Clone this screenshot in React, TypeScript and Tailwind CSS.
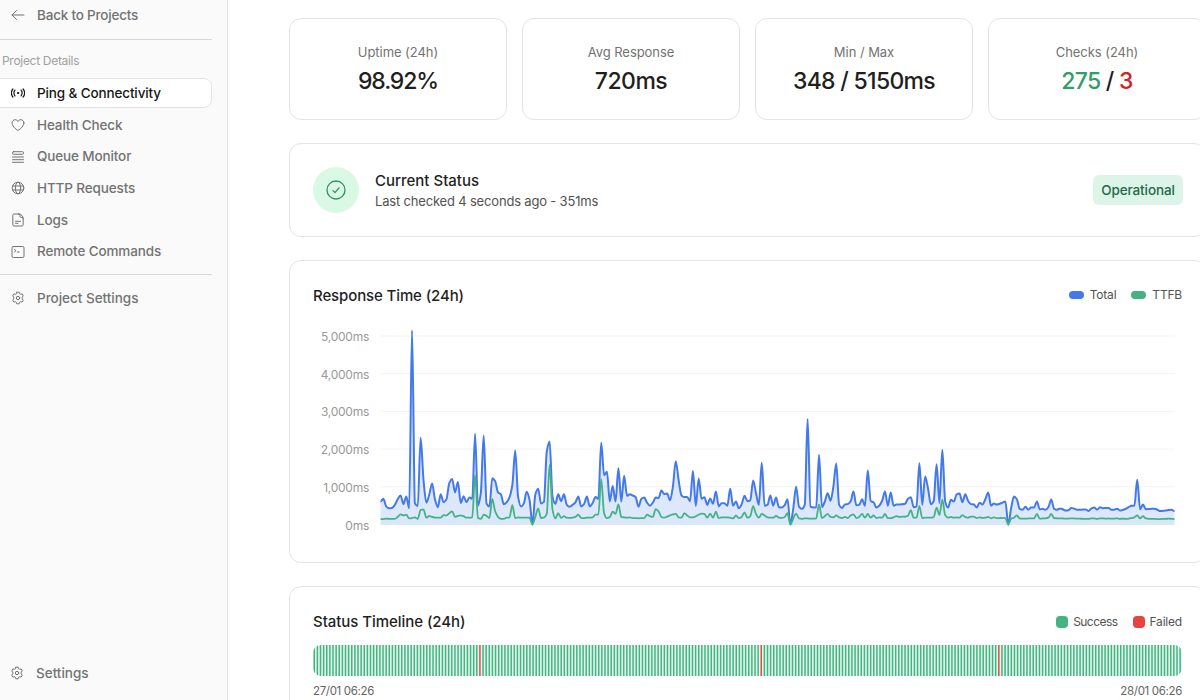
import type { ReactNode } from 'react';

interface NavItem {
  label: string;
  icon: ReactNode;
  active?: boolean;
}

const TOTAL = [
  610, 680, 480, 430, 440, 520, 670, 770, 540, 740, 430, 5150, 560, 490, 2300, 1180, 580, 790, 1090, 670,
  460, 800, 590, 670, 1100, 1210, 850, 1130, 570, 750, 590, 715, 680, 2410, 500, 830, 2360, 550, 480, 1230,
  1150, 850, 800, 540, 590, 720, 1050, 1960, 740, 480, 560, 870, 650, 0, 790, 950, 560, 600, 1930, 2200,
  740, 550, 800, 620, 800, 520, 470, 520, 590, 740, 480, 540, 740, 480, 570, 730, 680, 2170, 1310, 1400,
  610, 1020, 610, 1490, 610, 1290, 760, 800, 770, 730, 470, 680, 715, 580, 500, 580, 715, 705, 900, 810,
  820, 640, 1000, 1680, 1180, 770, 730, 730, 620, 1420, 490, 1220, 680, 725, 520, 690, 550, 875, 480, 565,
  565, 495, 950, 495, 610, 430, 540, 760, 620, 640, 1165, 830, 520, 1640, 500, 520, 770, 500, 715, 460,
  450, 510, 670, 0, 430, 1000, 475, 415, 520, 2800, 475, 450, 460, 1850, 460, 610, 830, 630, 1010, 1620,
  520, 440, 530, 540, 610, 875, 510, 520, 670, 495, 1430, 625, 590, 450, 500, 630, 875, 500, 850, 500,
  530, 530, 535, 550, 680, 725, 460, 480, 1625, 520, 1270, 960, 540, 625, 1600, 570, 1980, 610, 450, 655,
  610, 800, 820, 590, 800, 625, 540, 530, 450, 580, 530, 670, 850, 500, 555, 530, 550, 580, 610, 0,
  430, 740, 670, 415, 390, 470, 390, 450, 450, 610, 400, 415, 390, 460, 665, 415, 390, 425, 405, 370,
  380, 440, 420, 390, 390, 395, 395, 360, 425, 450, 390, 460, 430, 440, 440, 390, 390, 420, 370, 390,
  415, 460, 495, 500, 1185, 405, 530, 405, 410, 415, 415, 395, 355, 365, 370, 385, 390, 355,
];

const TTFB = [
  140, 145, 155, 150, 150, 150, 200, 270, 240, 260, 160, 170, 190, 150, 390, 400, 180, 230, 200, 185,
  180, 180, 250, 240, 300, 350, 200, 230, 240, 220, 180, 180, 190, 1310, 180, 150, 260, 230, 170, 680,
  350, 200, 150, 150, 180, 190, 510, 170, 190, 180, 180, 185, 180, 0, 200, 430, 170, 180, 280, 1580,
  400, 160, 300, 175, 220, 180, 175, 180, 200, 260, 175, 170, 180, 180, 190, 260, 260, 1200, 300, 170,
  200, 340, 280, 530, 200, 190, 180, 190, 170, 170, 165, 170, 170, 260, 220, 200, 410, 350, 200, 180,
  210, 240, 270, 280, 190, 180, 300, 240, 190, 190, 220, 260, 290, 280, 180, 290, 180, 340, 170, 190,
  190, 190, 180, 160, 240, 170, 200, 320, 180, 220, 490, 280, 180, 280, 240, 190, 180, 180, 230, 180,
  175, 200, 300, 0, 160, 290, 160, 150, 160, 160, 155, 155, 160, 530, 170, 220, 280, 200, 190, 240,
  190, 170, 200, 170, 240, 270, 170, 200, 280, 180, 280, 180, 240, 170, 190, 180, 280, 170, 170, 190,
  220, 200, 210, 205, 230, 380, 180, 180, 490, 170, 180, 180, 180, 200, 450, 250, 660, 250, 180, 200,
  180, 190, 180, 250, 200, 180, 210, 210, 170, 190, 175, 180, 200, 165, 190, 170, 170, 175, 170, 0,
  150, 180, 240, 160, 155, 155, 160, 165, 165, 280, 155, 160, 165, 180, 280, 170, 165, 160, 160, 155,
  155, 165, 160, 155, 155, 150, 150, 150, 165, 160, 150, 160, 165, 155, 160, 155, 155, 165, 150, 155,
  150, 155, 170, 190, 240, 160, 220, 160, 150, 150, 150, 145, 145, 150, 150, 155, 150, 145,
];

const STEP = 794 / (TOTAL.length - 1);
const FAILED = [53, 143, 219];

// Monotone cubic path, so that the spikes never overshoot their samples
function linePath(values: number[]) {
  const pts = values.map((v, i) => [66.5 + i * STEP, 202.5 - v * 0.0377]);
  const slopes = pts.slice(1).map((p, i) => (p[1] - pts[i][1]) / STEP);
  const tangents = pts.map((_, i) => {
    const a = slopes[i - 1];
    const b = slopes[i];
    if (a === undefined || b === undefined || a * b <= 0) return 0;
    return (2 * a * b) / (a + b);
  });
  let d = `M${pts[0][0]},${pts[0][1]}`;
  for (let i = 1; i < pts.length; i++) {
    const [x0, y0] = pts[i - 1];
    const [x1, y1] = pts[i];
    const h = STEP / 3;
    d += `C${(x0 + h).toFixed(2)},${(y0 + tangents[i - 1] * h).toFixed(2)} ${(x1 - h).toFixed(2)},${(y1 - tangents[i] * h).toFixed(2)} ${x1.toFixed(2)},${y1.toFixed(2)}`;
  }
  return d;
}

function Icon({ children }: { children: ReactNode }) {
  return (
    <svg
      className="h-3.5 w-3.5 shrink-0"
      viewBox="0 0 14 14"
      fill="none"
      stroke="currentColor"
      strokeWidth="1"
      strokeLinecap="round"
      strokeLinejoin="round"
    >
      {children}
    </svg>
  );
}

const GEAR = (
  <Icon>
    <path d="M5.8 1.2h2.4l.4 1.5 1 .6 1.5-.4 1.2 2-1.1 1.2v1.8l1.1 1.2-1.2 2-1.5-.4-1 .6-.4 1.5H5.8l-.4-1.5-1-.6-1.5.4-1.2-2 1.1-1.2V6.1L1.7 4.9l1.2-2 1.5.4 1-.6z" />
    <circle cx="7" cy="7" r="1.7" />
  </Icon>
);

const NAV: NavItem[] = [
  {
    label: 'Ping & Connectivity',
    active: true,
    icon: (
      <Icon>
        <path d="M1.9 3C-.1 5.200-.1 8.800 1.900 11M3.900 4.100c-1.100 1.600-1.100 4.200 0 5.800M12.100 3c2 2.200 2 5.800 0 8M10.100 4.100c1.100 1.600 1.100 4.200 0 5.800" strokeWidth="1.2" />
        <circle cx="7" cy="7" r=".7" fill="currentColor" />
      </Icon>
    ),
  },
  {
    label: 'Health Check',
    icon: (
      <Icon>
        <path d="M12.9 4.9c0-1.8-1.4-3.2-3.1-3.2-1.2 0-2.3.7-2.8 1.7-.5-1-1.6-1.7-2.8-1.7-1.7 0-3.1 1.4-3.1 3.2C1.1 9.3 7 12.5 7 12.5s5.9-3.2 5.900-7.600z" />
      </Icon>
    ),
  },
  {
    label: 'Queue Monitor',
    icon: (
      <Icon>
        <rect x="1.5" y="1.7" width="11" height="2.6" rx="1" />
        <path d="M1.5 7h11M1.5 9.7h11M1.5 12.3h11" />
      </Icon>
    ),
  },
  {
    label: 'HTTP Requests',
    icon: (
      <Icon>
        <circle cx="7" cy="7" r="5.8" />
        <ellipse cx="7" cy="7" rx="2.6" ry="5.8" />
        <path d="M1.7 5h10.6M1.7 9h10.6" />
      </Icon>
    ),
  },
  {
    label: 'Logs',
    icon: (
      <Icon>
        <path d="M7.8 1H3c-.7 0-1.2.5-1.2 1.2v9.600c0 .7.5 1.200 1.200 1.200h8c.7 0 1.200-.5 1.200-1.200V5.800C12.200 3.200 10.400 1 7.800 1zM7.800 1c.9 0 1.200.6 1.200 1.200v1.200c0 .6.4 1 1 1h1c.8 0 1.200.6 1.200 1.400M4.500 8.300h5M4.500 10.300h2.500" />
      </Icon>
    ),
  },
  {
    label: 'Remote Commands',
    icon: (
      <Icon>
        <rect x="1" y="1.5" width="12" height="11" rx="1.3" />
        <path d="M3.5 4.5l1.5 1.2-1.5 1.2M6.3 7h1.9" />
      </Icon>
    ),
  },
];

const Y_LABELS = ['5,000ms', '4,000ms', '3,000ms', '2,000ms', '1,000ms', '0ms'];

function Sidebar() {
  return (
    <aside className="flex h-full w-[228px] shrink-0 flex-col border-r border-[#e4e4e7] bg-[#fafafa] pr-[15px] text-[13.5px] font-medium text-[#737373]">
      <a className="flex h-[30px] items-center gap-3 pl-[11px]">
        <Icon>
          <path d="M1 7h12M5.5 2.5L1 7l4.5 4.5" />
        </Icon>
        <span className="tracking-[-0.2px]">Back to Projects</span>
      </a>
      <div className="mt-[9px] border-t border-[#d8d8da]" />
      <p className="mt-[13px] pl-0.5 text-xs leading-4 font-normal tracking-[-0.3px] text-[#a1a1a1]">Project Details</p>
      <nav className="mt-[9px] flex flex-col gap-0.5">
        {NAV.map((item) => (
          <a
            key={item.label}
            className={
              item.active
                ? '-ml-2 flex h-[30px] items-center gap-3 rounded-lg border border-[#e4e4e7] bg-white pl-[18px] text-[#171717]'
                : 'flex h-[29.7px] items-center gap-3 pl-[11px]'
            }
          >
            {item.icon}
            <span className="tracking-[-0.13px]">{item.label}</span>
          </a>
        ))}
      </nav>
      <div className="mt-2 border-t border-[#d8d8da]" />
      <a className="mt-2 flex h-[30px] items-center gap-3 pl-[11px]">
        {GEAR}
        <span className="tracking-[-0.02px]">Project Settings</span>
      </a>
      <a className="mt-auto mb-3 flex h-[30px] items-center gap-3 pl-2.5">
        {GEAR}
        <span>Settings</span>
      </a>
    </aside>
  );
}

function StatCard({ label, children }: { label: string; children: ReactNode }) {
  return (
    <div className="flex h-[102px] flex-col items-center rounded-xl border border-[#e4e4e7] bg-white pt-[23px]">
      <span className="text-[13px] leading-5 tracking-[-0.05px] text-[#737373]">{label}</span>
      <span className="mt-0.5 text-[23px] leading-[34px] font-medium tracking-[-0.7px] whitespace-nowrap text-[#1f1f1f]">{children}</span>
    </div>
  );
}

function ResponseChart() {
  const total = linePath(TOTAL);
  const ttfb = linePath(TTFB);
  return (
    <div className="mt-[15px] flex">
      <div className="-mt-1 flex w-[55px] shrink-0 flex-col text-right text-xs leading-[37.7px] tracking-[-0.25px] text-[#999]">
        {Y_LABELS.map((label) => (
          <span key={label}>{label}</span>
        ))}
      </div>
      <svg className="-ml-[55px] h-[220px] w-[869px] shrink-0" viewBox="0 0 869 220" fill="none">
        {Y_LABELS.map((label, i) => (
          <path key={label} d={`M66.5 ${14 + i * 37.7}H861`} stroke="#f3f3f4" />
        ))}
        <path d={`${total}V202.5H66.5Z`} fill="#3b76f0" fillOpacity="0.17" />
        <path d={`${ttfb}V202.5H66.5Z`} fill="#42b883" fillOpacity="0.02" />
        <path d={total} stroke="#4379ec" strokeWidth="2" strokeLinejoin="round" />
        <path d={ttfb} stroke="#45b283" strokeWidth="1.8" strokeLinejoin="round" />
      </svg>
    </div>
  );
}

function TimelineBars() {
  const pitch = 869 / TOTAL.length;
  return (
    <div className="mt-3 -ml-px h-[31px] w-[869px] overflow-hidden rounded-lg bg-[#dcfae9]">
      <svg className="h-full w-full" viewBox="0 0 869 31">
        {TOTAL.map((_, i) => (
          <rect key={i} x={0.5 + i * pitch} width="1.5" height="31" fill={FAILED.includes(i) ? '#e5484d' : '#4bb085'} />
        ))}
      </svg>
    </div>
  );
}

export default function App() {
  return (
    <div className="flex h-[700px] w-[1200px] overflow-hidden bg-white font-[Inter,'Liberation_Sans',sans-serif] text-[#1f1f1f]">
      <Sidebar />
      <main className="min-w-0 flex-1 pt-[18px] pl-[61px]">
        <div className="w-[917px]">
          {/* Stats */}
          <div className="grid grid-cols-4 gap-[15px]">
            <StatCard label="Uptime (24h)">
              <span className="tracking-[-1.1px]">98.92%</span>
            </StatCard>
            <StatCard label="Avg Response">
              <span className="tracking-[-0.5px]">720ms</span>
            </StatCard>
            <StatCard label="Min / Max">348 / 5150ms</StatCard>
            <StatCard label="Checks (24h)">
              <span className="text-[#2f9e6b]">275</span> / <span className="text-[#d3221f]">3</span>
            </StatCard>
          </div>

          {/* Current status */}
          <section className="mt-[23px] flex h-[94px] items-center rounded-xl border border-[#e4e4e7] pr-[22px] pl-6">
            <div className="-ml-px flex h-[46px] w-[46px] items-center justify-center rounded-full bg-[#d9f9e4] text-[#2f8f66]">
              <svg width="20" height="20" viewBox="0 0 20 20" fill="none" stroke="currentColor" strokeWidth="1.3" strokeLinecap="round" strokeLinejoin="round">
                <circle cx="10" cy="10" r="9" />
                <path d="M7 10.6l2 2 4-4.8" />
              </svg>
            </div>
            <div className="ml-4 flex-1">
              <h2 className="pt-px text-[15px] leading-[22px] font-medium">Current Status</h2>
              <p className="-mt-px text-[13px] leading-5 tracking-[-0.18px] text-[#525252]">Last checked 4 seconds ago - 351ms</p>
            </div>
            <span className="flex h-[30px] w-[90px] items-center justify-center rounded-md bg-[#dcf5e8] text-[13.5px] font-medium tracking-[-0.1px] text-[#24694a]">
              Operational
            </span>
          </section>

          {/* Response time */}
          <section className="mt-[23px] h-[303px] rounded-xl border border-[#e4e4e7] pt-[23px] pr-[23px] pl-6">
            <div className="-ml-px flex h-[23px] items-center">
              <h2 className="flex-1 pt-px text-[15px] font-medium tracking-[-0.12px]">Response Time (24h)</h2>
              <div className="flex items-center gap-[15px] pb-px text-xs tracking-[-0.2px] text-[#525252]">
                <span className="flex items-center gap-1.5">
                  <i className="h-2 w-[15px] rounded-full bg-[#4379ec]" />
                  Total
                </span>
                <span className="flex items-center gap-1.5">
                  <i className="h-2 w-[15px] rounded-full bg-[#45b283]" />
                  TTFB
                </span>
              </div>
            </div>
            <ResponseChart />
          </section>

          {/* Status timeline */}
          <section className="mt-[23px] h-[200px] rounded-xl border border-[#e4e4e7] pt-[23px] pr-[23px] pl-6">
            <div className="-ml-px flex h-[23px] items-center">
              <h2 className="flex-1 pt-px text-[15px] font-medium tracking-[-0.05px]">Status Timeline (24h)</h2>
              <div className="flex items-center gap-[15px] text-xs tracking-[-0.4px] text-[#525252]">
                <span className="flex items-center gap-[5px]">
                  <i className="h-3 w-3 rounded-[4px] bg-[#43b581]" />
                  <span className="tracking-[-0.55px]">Success</span>
                </span>
                <span className="flex items-center gap-[5px]">
                  <i className="h-3 w-3 rounded-[4px] bg-[#e5443f]" />
                  <span className="tracking-[-0.2px]">Failed</span>
                </span>
              </div>
            </div>
            <TimelineBars />
            <div className="mt-[7px] -ml-px flex justify-between text-[11.5px] leading-4 tracking-[-0.33px] text-[#666]">
              <span>27/01 06:26</span>
              <span>28/01 06:26</span>
            </div>
          </section>
        </div>
      </main>
    </div>
  );
}
